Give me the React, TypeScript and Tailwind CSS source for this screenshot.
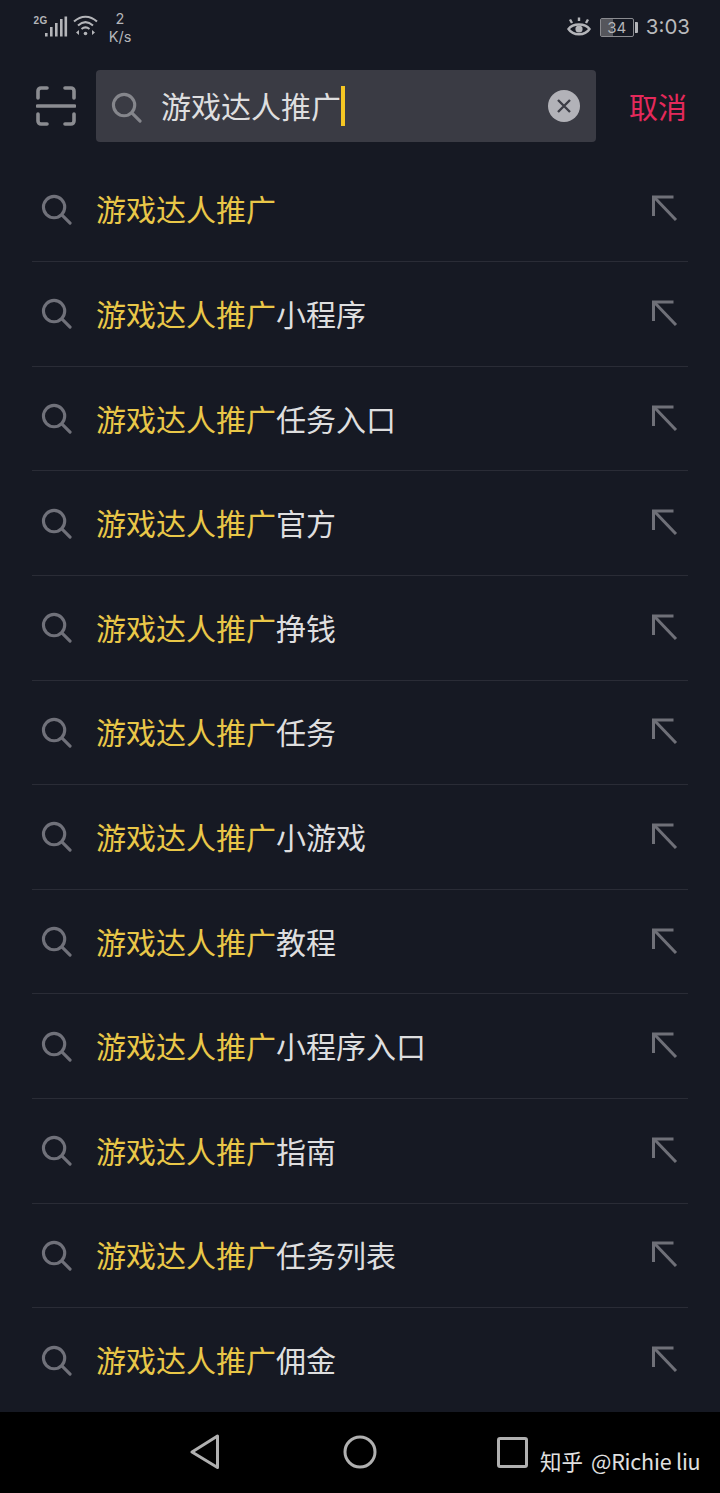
const rows = [
  '',
  '小程序',
  '任务入口',
  '官方',
  '挣钱',
  '任务',
  '小游戏',
  '教程',
  '小程序入口',
  '指南',
  '任务列表',
  '佣金',
];

const cjk = "font-['Noto_Sans_CJK_SC',sans-serif]";

function SearchIcon({ className }: { className: string }) {
  return (
    <svg viewBox="0 0 32 32" className={className} fill="none" stroke="currentColor" strokeWidth="3.2" strokeLinecap="round">
      <circle cx="13.5" cy="13.5" r="11" />
      <path d="M21.5 21.5L30 30" />
    </svg>
  );
}

function StatusBar() {
  return (
    <div className="flex h-[70px] items-start justify-between pl-[33px] pr-[30px] font-['Inter',sans-serif] text-[#b4b5b9]">
      <div className="flex items-start">
        <svg viewBox="0 0 36 24" className="mt-[14px] h-[24px] w-[36px]" fill="currentColor">
          <text x="0.5" y="10" fontSize="10" fontWeight="700" fontFamily="Liberation Sans, sans-serif" letterSpacing="0.5">2G</text>
          <rect x="12" y="19" width="2.6" height="3.5" />
          <rect x="17" y="13" width="2.6" height="9.5" />
          <rect x="22" y="9" width="2.6" height="13.5" />
          <rect x="27" y="5" width="2.6" height="17.5" />
          <rect x="31.5" y="2.5" width="2.6" height="20" />
        </svg>
        <svg viewBox="0 0 28 24" className="ml-[3px] mt-[14px] h-[24px] w-[28px]" fill="none" stroke="currentColor" strokeWidth="2">
          <path d="M2 7.5C9 1 18 1 25 7.5" />
          <path d="M6 11.5C11 7 16 7 21 11.5" />
          <path d="M9.5 15C12 13 15 13 17.5 15" />
          <circle cx="13.5" cy="19.5" r="1.8" fill="currentColor" stroke="none" />
          <path d="M7 21l-3-2.5 3-2.5zM20 16l3 2.5-3 2.5z" fill="currentColor" stroke="none" />
        </svg>
        <div className="ml-[7px] mt-[10px] w-[26px] text-center text-[14.5px] leading-[18px]">
          <div>2</div>
          <div>K/s</div>
        </div>
      </div>
      <div className="mt-[14px] flex items-center">
        <svg viewBox="0 0 24 22" className="h-[22px] w-[24px]" fill="none" stroke="currentColor" strokeWidth="2.4">
          <path d="M1.5 13C6 7 18 7 22.5 13C18 20 6 20 1.5 13Z" />
          <circle cx="12" cy="13" r="3.6" fill="currentColor" stroke="none" />
          <path d="M5 7L3 3.5M12 5V1.5M19 7l2-3.5" />
        </svg>
        <div className="relative ml-[9px] flex h-[19px] w-[34px] items-center justify-center rounded-[2px] border border-[#8a8b90] text-[15px] leading-none">
          <div className="absolute inset-y-0 left-0 w-[12px] bg-[#55565c]" />
          <span className="relative">34</span>
        </div>
        <div className="ml-[1px] h-[11px] w-[3px] rounded-r-[1px] bg-[#b4b5b9]" />
        <span className="ml-[8px] text-[20.5px] leading-[26px] text-[#b9babd]">3:03</span>
      </div>
    </div>
  );
}

function SearchBar() {
  return (
    <div className={`flex h-[72px] items-center pl-[36px] pr-[33px] ${cjk}`}>
      <svg viewBox="0 0 40 40" className="h-[40px] w-[40px] text-[#8b8c91]" fill="none" stroke="currentColor" strokeWidth="3.6" strokeLinecap="round" strokeLinejoin="round">
        <path d="M2 12V5a3 3 0 0 1 3-3h6M29 2h6a3 3 0 0 1 3 3v7" />
        <path d="M1.5 20h37" />
        <path d="M2 28v7a3 3 0 0 0 3 3h6M29 38h6a3 3 0 0 0 3-3v-7" />
      </svg>
      <div className="ml-[20px] flex h-[72px] w-[500px] items-center rounded-[4px] bg-[#3a3b44] pl-[15px] pr-[16px]">
        <SearchIcon className="mt-[2px] h-[31px] w-[31px] text-[#85868c]" />
        <div className="ml-[19px] flex flex-1 items-center text-[30px] leading-none text-[#dededf]">
          <span className="mb-[2px]">游戏达人推广</span>
          <span className="h-[40px] w-[4px] bg-[#f5c623]" />
        </div>
        <div className="flex h-[32px] w-[32px] items-center justify-center rounded-full bg-[#b2b2b8]">
          <svg viewBox="0 0 16 16" className="h-[16px] w-[16px] text-[#3c3d46]" fill="none" stroke="currentColor" strokeWidth="2.4">
            <path d="M2 2l12 12M14 2L2 14" />
          </svg>
        </div>
      </div>
      <span className="ml-auto text-[29px] leading-none text-[#e5295b]">取消</span>
    </div>
  );
}

function Row({ suffix }: { suffix: string }) {
  return (
    <div className="flex h-[104.6px] items-center border-b border-[#2a2c36] pl-[10px] pr-[10px] last:border-b-0">
      <SearchIcon className="-ml-[1px] h-[31px] w-[31px] text-[#70717a]" />
      <div className={`ml-[24px] mb-[2px] flex-1 text-[30px] leading-none text-[#dededf] ${cjk}`}>
        <span className="text-[#e9c748]">游戏达人推广</span>
        {suffix}
      </div>
      <svg viewBox="0 0 26 26" className="mb-[2px] h-[26px] w-[26px] text-[#6f7078]" fill="none" stroke="currentColor" strokeWidth="3">
        <path d="M1.5 21V2h20" />
        <path d="M2 2l22 23" />
      </svg>
    </div>
  );
}

function NavBar() {
  return (
    <div className="flex h-[81px] shrink-0 bg-black">
      <div className="relative flex-1">
        <svg viewBox="0 0 32 36" className="absolute left-[189px] top-[22px] h-[36px] w-[32px] text-[#b0b0b0]" fill="none" stroke="currentColor" strokeWidth="3" strokeLinejoin="round">
          <path d="M28.5 2V33.5L3 18Z" />
        </svg>
        <svg viewBox="0 0 34 34" className="absolute left-[343px] top-[23px] h-[34px] w-[34px] text-[#b0b0b0]" fill="none" stroke="currentColor" strokeWidth="3">
          <circle cx="17" cy="17" r="15" />
        </svg>
        <div className="absolute left-[497px] top-[25px] h-[31px] w-[31px] rounded-[3px] border-[3px] border-[#b0b0b0]" />
        <span className={`absolute left-[540px] top-[38px] flex gap-[8px] text-[21.5px] leading-none text-[#e0e0e0] ${cjk}`}>
          <span>知乎</span>
          <span className="tracking-[-0.2px]">@Richie liu</span>
        </span>
      </div>
    </div>
  );
}

export default function App() {
  return (
    <div className="flex h-[1493px] w-[720px] flex-col overflow-hidden bg-[#161923]">
      <StatusBar />
      <SearchBar />
      <div className="mx-[32px] mt-[15.6px] min-h-0 flex-1 overflow-hidden">
        {rows.map((suffix, i) => (
          <Row key={i} suffix={suffix} />
        ))}
      </div>
      <NavBar />
    </div>
  );
}
